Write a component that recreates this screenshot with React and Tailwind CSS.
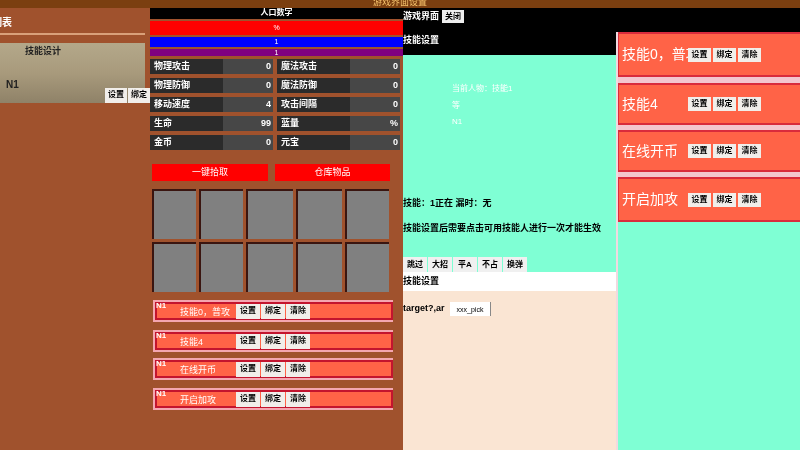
const font = { fontFamily: '"Liberation Sans", "Noto Sans CJK SC", sans-serif' }

const stats = [
  ['物理攻击', '0', '魔法攻击', '0'],
  ['物理防御', '0', '魔法防御', '0'],
  ['移动速度', '4', '攻击间隔', '0'],
  ['生命', '99', '蓝量', '%'],
  ['金币', '0', '元宝', '0'],
]

function SmallButton({ label, className = 'w-[24px] h-[15px]' }) {
  return (
    <button className={`${className} shrink-0 bg-[#f1eeea] text-black text-[8px] font-bold leading-none`}>{label}</button>
  )
}

function StatCell({ label, value }) {
  return (
    <div className="flex w-[123px] h-[15px] text-white text-[9px] leading-[15px] font-bold">
      <div className="w-[73px] bg-[#2b2b2b] pl-[4px]">{label}</div>
      <div className="flex-1 bg-[#474747] text-right pr-[2px]">{value}</div>
    </div>
  )
}

function SkillRow({ name, mtClass }) {
  return (
    <div className={`${mtClass} h-[22px] w-[240px] ml-[3px] border-t-2 border-l-2 border-b-2 border-[#f4a6b0] relative`}>
      <div className="h-full border-2 border-[#c3142e] bg-[#ff6347] flex items-center">
        <span className="w-[79px] shrink-0 pl-[23px] pt-[3px] text-white text-[9px] whitespace-nowrap overflow-hidden">{name}</span>
        <div className="flex gap-[1px]">
          <SmallButton label="设置" />
          <SmallButton label="绑定" />
          <SmallButton label="清除" />
        </div>
      </div>
      <span className="absolute left-[1px] top-[0px] text-white text-[8px] font-bold leading-none">N1</span>
    </div>
  )
}

function SkillCard({ name, mtClass, h }) {
  return (
    <div className={`${mtClass} ${h} border-y-2 border-l border-[#d92b3c] bg-[#ff6347] flex items-center pl-[3px]`}>
      <span className="w-[66px] shrink-0 text-white text-[14px] whitespace-nowrap overflow-hidden">{name}</span>
      <div className="flex gap-[2px]">
        <SmallButton label="设置" className="w-[23px] h-[14px]" />
        <SmallButton label="绑定" className="w-[23px] h-[14px]" />
        <SmallButton label="清除" className="w-[23px] h-[14px]" />
      </div>
    </div>
  )
}

export default function App() {
  return (
    <div className="w-[800px] h-[450px] overflow-hidden bg-[#a0522d] blur-[0.4px]" style={font}>
      <div className="h-[8px] bg-[#7b3f10] text-center text-[#f5c26b] text-[9px] leading-[5px] overflow-hidden">
        游戏界面设置
      </div>
      <div className="flex h-[442px]">
        <div className="w-[150px] shrink-0 pr-[5px] overflow-hidden">
          <div className="h-[25px] text-white text-[10px] font-bold leading-[30px] -ml-[8px] whitespace-nowrap">列表</div>
          <div className="h-[2px] bg-[#d9a07a]"></div>
          <div className="mt-[8px] h-[60px] bg-gradient-to-b from-[#b4a88a] via-[#a89a7c] to-[#8f8268]">
            <div className="pl-[25px] pt-[2px] text-[#222] text-[9px] font-bold">技能设计</div>
            <div className="mt-[29px] flex items-start">
              <span className="w-[105px] shrink-0 pl-[6px] -mt-[11px] text-[#222] text-[10px] font-bold">N1</span>
              <div className="flex gap-[1px]">
                <SmallButton label="设置" className="w-[22px] h-[15px]" />
                <SmallButton label="绑定" className="w-[22px] h-[15px]" />
              </div>
            </div>
          </div>
        </div>

        <div className="w-[253px] shrink-0 overflow-hidden">
          <div className="h-[11px] bg-black text-center text-white text-[8px] font-bold leading-[9px]">人口数字</div>
          <div className="mt-[2px] h-[14px] bg-[#ff0000] text-center text-white text-[7px] leading-[14px]">%</div>
          <div className="mt-[2px] h-[10px] bg-[#0000ff] text-center text-white text-[7px] leading-[10px]">1</div>
          <div className="mt-[2px] h-[7px] bg-[#800080] text-center text-white text-[7px] leading-[7px]">1</div>
          <div className="mt-[3px] flex flex-col gap-[4px]">
            {stats.map((row) => (
              <div key={row[0]} className="flex gap-[4px]">
                <StatCell label={row[0]} value={row[1]} />
                <StatCell label={row[2]} value={row[3]} />
              </div>
            ))}
          </div>
          <div className="mt-[14px] ml-[2px] flex gap-[7px]">
            <button className="w-[116px] h-[17px] bg-[#ff0000] text-white text-[9px]">一键拾取</button>
            <button className="w-[115px] h-[17px] bg-[#ff0000] text-white text-[9px]">仓库物品</button>
          </div>
          <div className="mt-[8px] ml-[2px] w-[238px] grid grid-cols-[44px_44px_47px_46px_44px] grid-rows-[50px_50px] gap-x-[3px] gap-y-[3px]">
            {Array.from({ length: 10 }).map((_, i) => (
              <div key={i} className="bg-[#808080] border-l-2 border-t-2 border-[#3a1510]"></div>
            ))}
          </div>
          <SkillRow name="技能0，普攻" mtClass="mt-[8px]" />
          <SkillRow name="技能4" mtClass="mt-[8px]" />
          <SkillRow name="在线开币" mtClass="mt-[6px]" />
          <SkillRow name="开启加攻" mtClass="mt-[8px]" />
        </div>

        <div className="w-[213px] shrink-0 flex flex-col overflow-hidden">
          <div className="h-[47px] bg-black text-white text-[9px] font-bold">
            <div className="flex items-center h-[16px] pt-[1px] gap-[3px] whitespace-nowrap">
              <span>游戏界面</span>
              <button className="w-[22px] h-[13px] bg-[#eeeeee] text-black text-[8px] leading-none">关闭</button>
            </div>
            <div className="mt-[10px] leading-[12px]">技能设置</div>
          </div>
          <div className="h-[217px] bg-[#7fffd4] pt-[26px]">
            <div className="ml-[49px] text-white text-[8px] leading-[16.5px]">
              <div>当前人物：技能1</div>
              <div>等</div>
              <div>N1</div>
            </div>
            <div className="mt-[66px] text-black text-[9px] font-bold whitespace-nowrap">技能：1正在 漏时：无</div>
            <div className="mt-[12px] text-black text-[9px] font-bold whitespace-nowrap">技能设置后需要点击可用技能人进行一次才能生效</div>
            <div className="mt-[21px] flex gap-[1px] text-[8px] text-black font-bold">
              {['跳过', '大招', '平A', '不占', '换弹'].map((t) => (
                <div key={t} className="w-[24px] h-[15px] bg-[#f0f0f0] text-center leading-[15px]">{t}</div>
              ))}
            </div>
          </div>
          <div className="h-[19px] bg-white text-black text-[9px] font-bold leading-[19px]">技能设置</div>
          <div className="flex-1 bg-[#fae5d3] pt-[11px] flex items-start text-[9px] font-bold text-black whitespace-nowrap">
            <span className="w-[47px] shrink-0">target?,ar</span>
            <button className="h-[14px] w-[41px] bg-white border-r border-[#888] text-[7px] font-normal leading-none">xxx_pick</button>
          </div>
        </div>

        <div className="flex-1 bg-[#7fffd4] flex flex-col overflow-hidden">
          <div className="h-[24px] bg-black"></div>
          <div className="flex-1 border-l-2 border-[#f1d9e0]">
            <div className="bg-[#f3c6cf]">
              <SkillCard name="技能0，普攻" mtClass="" h="h-[45px]" />
              <SkillCard name="技能4" mtClass="mt-[6px]" h="h-[42px]" />
              <SkillCard name="在线开币" mtClass="mt-[5px]" h="h-[42px]" />
              <SkillCard name="开启加攻" mtClass="mt-[5px]" h="h-[45px]" />
            </div>
          </div>
        </div>
      </div>
    </div>
  )
}
